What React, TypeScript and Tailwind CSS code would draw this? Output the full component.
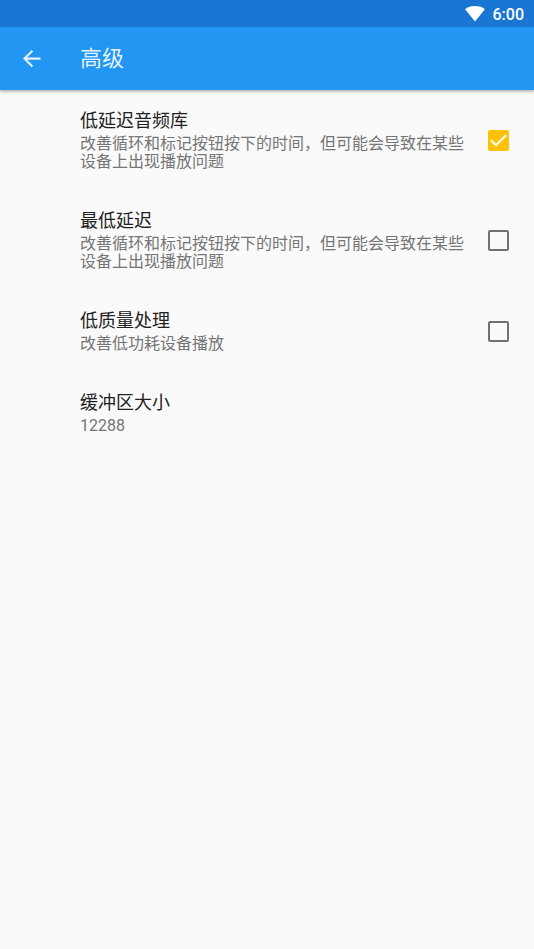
import { useState } from "react";

type Preference = {
  id: string;
  title: string;
  summary: string;
  defaultChecked: boolean;
};

const preferences: Preference[] = [
  {
    id: "low-latency",
    title: "低延迟音频库",
    summary: "改善循环和标记按钮按下的时间，但可能会导致在某些设备上出现播放问题",
    defaultChecked: true,
  },
  {
    id: "lowest-latency",
    title: "最低延迟",
    summary: "改善循环和标记按钮按下的时间，但可能会导致在某些设备上出现播放问题",
    defaultChecked: false,
  },
  {
    id: "low-quality",
    title: "低质量处理",
    summary: "改善低功耗设备播放",
    defaultChecked: false,
  },
];

const StatusBar = () => {
  return (
    <div className="flex h-[27px] items-center justify-end gap-2 bg-[#1976d2] pr-[10px] text-white">
      <svg width="20" height="16" viewBox="0 0 20 16" fill="currentColor" aria-hidden="true">
        <path d="M10 15.6 0.1 3.2C2.6 1.2 6.1 0.1 10 0.1s7.4 1.1 9.9 3.1L10 15.6Z" />
      </svg>
      <span className="pt-[2px] text-base leading-5 font-medium">6:00</span>
    </div>
  );
};

const AppBar = () => {
  return (
    <header className="relative flex h-[63px] items-center bg-[#2196f3] pl-5 text-[#e3f2fd] shadow-[0_2px_2px_rgba(0,0,0,0.25)]">
      <button type="button" aria-label="返回" className="w-[60px]">
        <svg width="24" height="24" viewBox="0 0 24 24" fill="currentColor" aria-hidden="true">
          <path d="M20.5 10.5H7.1l6.1-6.1L11.7 2.9 3 11.6l8.7 8.7 1.5-1.5-6.1-6.1h13.4v-2.2Z" />
        </svg>
      </button>
      <h1 className="text-[22px] leading-8">高级</h1>
    </header>
  );
};

type PreferenceTextProps = {
  title: string;
  summary: string;
};

const PreferenceText = ({ title, summary }: PreferenceTextProps) => {
  return (
    <span className="flex flex-1 flex-col gap-[2px]">
      <span className="text-lg leading-6 text-[#212121]">{title}</span>
      <span className="text-base leading-[18px] text-[#757575]">{summary}</span>
    </span>
  );
};

const CheckboxPreference = ({ id, title, summary, defaultChecked }: Preference) => {
  const [checked, setChecked] = useState(defaultChecked);

  return (
    <label
      htmlFor={id}
      className="flex cursor-pointer items-center gap-4 pt-[18px] pr-[25px] pb-5 pl-20"
    >
      <PreferenceText title={title} summary={summary} />
      <span className="grid">
        <input
          id={id}
          type="checkbox"
          checked={checked}
          onChange={(e) => setChecked(e.target.checked)}
          className="col-start-1 row-start-1 size-[21px] appearance-none rounded-[2px] border-2 border-[#717171] checked:border-[#ffc107] checked:bg-[#ffc107]"
        />
        {checked && (
          <svg
            className="pointer-events-none col-start-1 row-start-1 size-[21px]"
            viewBox="0 0 21 21"
            fill="none"
            stroke="#fff"
            strokeWidth="2"
            aria-hidden="true"
          >
            <path d="m3 10.2 5 5L18 5.2" />
          </svg>
        )}
      </span>
    </label>
  );
};

const App = () => {
  return (
    <div className="min-h-screen bg-[#fafafa] font-[Roboto,'Noto_Sans_CJK_SC',sans-serif]" lang="zh-CN">
      <StatusBar />
      <AppBar />
      <main className="pt-px">
        {preferences.map((preference) => (
          <CheckboxPreference key={preference.id} {...preference} />
        ))}
        <button type="button" className="flex w-full pt-[18px] pr-[25px] pb-5 pl-20 text-left">
          <PreferenceText title="缓冲区大小" summary="12288" />
        </button>
      </main>
    </div>
  );
};

export default App;
